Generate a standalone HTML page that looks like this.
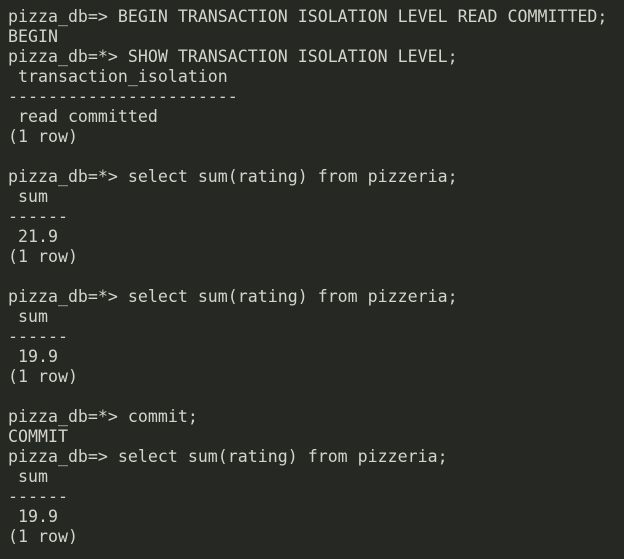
<!DOCTYPE html>
<html><head><meta charset="utf-8"><style>
html,body{margin:0;padding:0;background:#262823;width:624px;height:559px;overflow:hidden}
pre{margin:0;padding:7px 0 0 8px;font-family:"DejaVu Sans Mono","Liberation Mono",monospace;font-size:16.6px;line-height:20px;color:#d4d4cc;}
</style></head><body><pre>pizza_db=&gt; BEGIN TRANSACTION ISOLATION LEVEL READ COMMITTED;
BEGIN
pizza_db=*&gt; SHOW TRANSACTION ISOLATION LEVEL;
 transaction_isolation
-----------------------
 read committed
(1 row)

pizza_db=*&gt; select sum(rating) from pizzeria;
 sum
------
 21.9
(1 row)

pizza_db=*&gt; select sum(rating) from pizzeria;
 sum
------
 19.9
(1 row)

pizza_db=*&gt; commit;
COMMIT
pizza_db=&gt; select sum(rating) from pizzeria;
 sum
------
 19.9
(1 row)</pre></body></html>
